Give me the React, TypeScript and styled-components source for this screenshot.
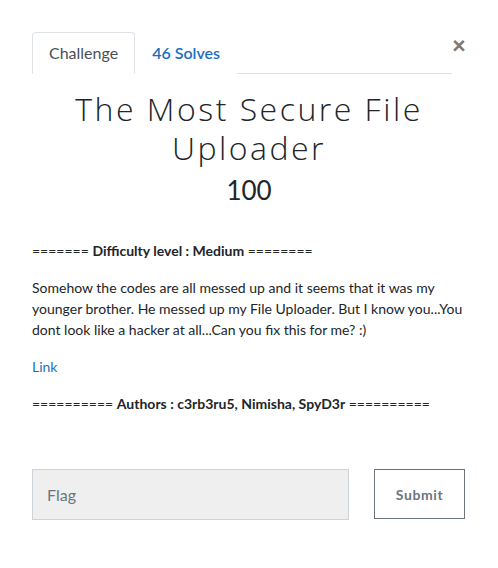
import React from "react";
import styled, { createGlobalStyle } from "styled-components";

const Global = createGlobalStyle`
  html, body { margin: 0; padding: 0; background: #fff; }
  body { font-family: Lato, "Open Sans", sans-serif; color: #212529; }
  * { box-sizing: border-box; }
`;

const Modal = styled.div`
  width: 498px;
  padding: 32px 32px 0 32px;
`;

const Header = styled.div`
  display: flex;
  align-items: flex-start;
`;

const TabList = styled.ul`
  flex: 1;
  display: flex;
  list-style: none;
  margin: 0;
  padding: 0;
  border-bottom: 1px solid #dee2e6;
`;

const Tab = styled.li<{ $active?: boolean }>`
  margin-bottom: -1px;
  padding: 8px 16px;
  font-size: 16px;
  line-height: 24px;
  border: 1px solid ${(p) => (p.$active ? "#dee2e6" : "transparent")};
  border-bottom-color: ${(p) => (p.$active ? "#fff" : "transparent")};
  border-radius: 4px 4px 0 0;
  background: #fff;
  color: ${(p) => (p.$active ? "#495057" : "#1b6fbf")};
  font-weight: ${(p) => (p.$active ? 400 : 600)};
`;

const Close = styled.button`
  border: none;
  background: none;
  padding: 0;
  margin: 3px 0 0 0;
  width: 14px;
  font-family: Lato, sans-serif;
  font-size: 24px;
  font-weight: 900;
  line-height: 20px;
  color: #7a7a7a;
  text-align: center;
`;

const Title = styled.h3`
  margin: 15px 0 0 0;
  text-align: center;
  font-family: "Open Sans", Lato, sans-serif;
  font-weight: 300;
  font-size: 32px;
  line-height: 39px;
  letter-spacing: 2.5px;
  color: #212529;
`;

const Points = styled.h4`
  margin: 8px 0 0 0;
  text-align: center;
  font-weight: 400;
  font-size: 26px;
  line-height: 31px;
  color: #212529;
`;

const Description = styled.div`
  margin-top: 34px;
  font-size: 14px;
  line-height: 21px;
`;

const Para = styled.p`
  margin: 0 0 16px 0;
`;

const Strong = styled.strong`
  font-weight: 700;
`;

const LinkA = styled.a`
  color: #1b6fbf;
  text-decoration: none;
`;

const FlagRow = styled.div`
  display: grid;
  grid-template-columns: 317px 91px;
  column-gap: 25px;
  align-items: start;
  margin-top: 55px;
`;

const FlagInput = styled.input`
  height: 51px;
  border: 1px solid #ccd3da;
  background: #efefef;
  padding: 0 14px;
  font-family: Lato, sans-serif;
  font-size: 16px;
  color: #495057;
  outline: none;
  &::placeholder { color: #6c757d; }
`;

const Submit = styled.button`
  height: 50px;
  border: 1px solid #6c757d;
  background: #fff;
  font-family: Lato, sans-serif;
  font-weight: 700;
  font-size: 14px;
  letter-spacing: 0.6px;
  color: #6c757d;
`;

export default function App() {
  return (
    <>
      <Global />
      <Modal>
        <Header>
          <TabList>
            <Tab $active>Challenge</Tab>
            <Tab>46 Solves</Tab>
          </TabList>
          <Close aria-label="Close">×</Close>
        </Header>
        <Title>
          The Most Secure File
          <br />
          Uploader
        </Title>
        <Points>100</Points>
        <Description>
          <Para>
            ======= <Strong>Difficulty level : Medium</Strong> ========
          </Para>
          <Para>
            Somehow the codes are all messed up and it seems that it was my younger brother. He
            messed up my File Uploader. But I know you...You dont look like a hacker at all...Can
            you fix this for me? :)
          </Para>
          <Para>
            <LinkA href="#">Link</LinkA>
          </Para>
          <Para>
            ========== <Strong>Authors : c3rb3ru5, Nimisha, SpyD3r</Strong> ==========
          </Para>
        </Description>
        <FlagRow>
          <FlagInput placeholder="Flag" />
          <Submit>Submit</Submit>
        </FlagRow>
      </Modal>
    </>
  );
}
